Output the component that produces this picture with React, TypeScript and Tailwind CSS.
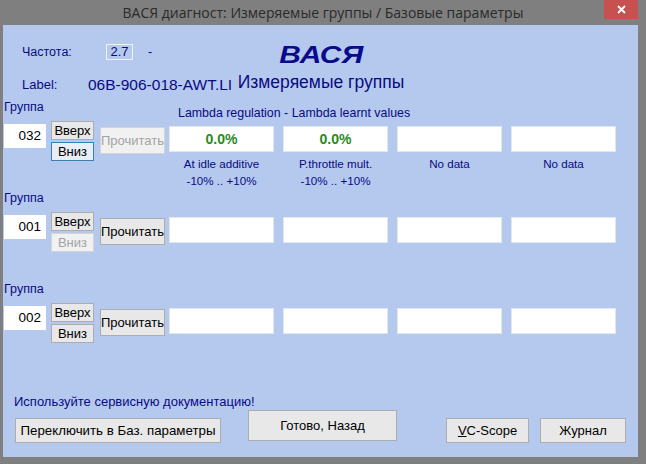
import React from "react"

const navy = "text-[#0a0a82]"

type Group = {
  id: string
  header?: string
  values: string[]
  captions: [string, string][]
  upDisabled?: boolean
  downDisabled?: boolean
  downFocused?: boolean
  readDisabled?: boolean
}

const groups: Group[] = [
  {
    id: "032",
    header: "Lambda regulation - Lambda learnt values",
    values: ["0.0%", "0.0%", "", ""],
    captions: [
      ["At idle additive", "-10% .. +10%"],
      ["P.throttle mult.", "-10% .. +10%"],
      ["No data", ""],
      ["No data", ""],
    ],
    downFocused: true,
    readDisabled: true,
  },
  {
    id: "001",
    values: ["", "", "", ""],
    captions: [],
    downDisabled: true,
  },
  {
    id: "002",
    values: ["", "", "", ""],
    captions: [],
  },
]

function WinButton({
  children,
  className = "",
  disabled,
  focused,
}: {
  children: React.ReactNode
  className?: string
  disabled?: boolean
  focused?: boolean
}) {
  const look = disabled
    ? "border-[#d4d4d4] bg-[#f1f1f1] text-[#a3a3a3]"
    : focused
      ? "border-[#3c7fb1] bg-[#e8eef6] text-black"
      : "border-[#adadad] bg-[#e8e8e8] text-black"
  return (
    <button
      type="button"
      className={`flex items-center justify-center whitespace-nowrap border leading-none ${look} ${className}`}
    >
      {children}
    </button>
  )
}

function GroupBlock({ g }: { g: Group }) {
  return (
    <div className="flex h-[91px]">
      <div className="flex w-[166px] flex-col">
        <div className={`mt-[1px] h-[16px] pl-[1px] text-[12.5px] leading-[16px] ${navy}`}>
          Группа
        </div>
        <div className="flex items-start">
          <div className="ml-[1px] mt-[9px] flex h-[24px] w-[42px] items-center justify-end bg-white pr-[5px] text-[13.5px] text-black">
            {g.id}
          </div>
          <div className="ml-[5px] mt-[6px] flex flex-col gap-[2px]">
            <WinButton className="h-[19px] w-[43px] text-[13px]" disabled={g.upDisabled}>
              Вверх
            </WinButton>
            <WinButton
              className="h-[19px] w-[43px] text-[13px]"
              disabled={g.downDisabled}
              focused={g.downFocused}
            >
              Вниз
            </WinButton>
          </div>
          <WinButton
            className="ml-[6px] mt-[12px] h-[27px] w-[65px] text-[13px]"
            disabled={g.readDisabled}
          >
            Прочитать
          </WinButton>
        </div>
      </div>
      <div className="flex flex-col">
        <div className={`mt-[8px] h-[14px] pl-[9px] text-[12.4px] leading-[14px] ${navy}`}>
          {g.header ?? ""}
        </div>
        <div className="mt-[6px] flex gap-[9px]">
          {g.values.map((v, i) => (
            <div key={i} className="flex w-[105px] flex-col items-center">
              <div className="flex h-[26px] w-full items-center justify-center border border-[#e2e6ee] bg-white text-[14px] font-bold text-[#2a8a1e]">
                {v}
              </div>
              {g.captions[i] && (
                <div className={`mt-[3px] text-center text-[11.6px] leading-[17px] ${navy}`}>
                  <div>{g.captions[i][0]}</div>
                  <div>{g.captions[i][1]}</div>
                </div>
              )}
            </div>
          ))}
        </div>
      </div>
    </div>
  )
}

export default function App() {
  return (
    <div
      className="flex h-[464px] w-[646px] flex-col bg-[#7f7f7f]"
      style={{ fontFamily: '"Liberation Sans", Arial, sans-serif' }}
    >
      <div className="relative flex h-[25px] items-center justify-center">
        <span
          className="text-[14px] text-[#2a2a2a]"
          style={{ fontFamily: '"Open Sans", "Noto Sans", sans-serif' }}
        >
          ВАСЯ диагност: Измеряемые группы / Базовые параметры
        </span>
        <button
          type="button"
          aria-label="Close"
          className="absolute right-[8px] top-0 flex h-[19px] w-[34px] items-center justify-center bg-[#c75050] text-white"
        >
          <svg width="9" height="9" viewBox="0 0 9 9">
            <path d="M1 1 L8 8 M8 1 L1 8" stroke="white" strokeWidth="1.8" />
          </svg>
        </button>
      </div>

      <div className="mb-[7px] ml-[3px] mr-[8px] flex flex-1 flex-col bg-[#b5c9ef]">
        <div className="flex h-[73px]">
          <div className="flex w-[230px] flex-col pl-[19px]">
            <div className={`mt-[19px] flex h-[16px] items-center text-[12.5px] ${navy}`}>
              <span className="w-[84px]">Частота:</span>
              <span className="flex h-[16px] w-[27px] items-center justify-center border border-[#eef2fa] text-[13px]">
                2.7
              </span>
              <span className="ml-[15px]">-</span>
            </div>
            <div className={`mt-[16px] flex h-[18px] items-center ${navy}`}>
              <span className="w-[66px] text-[13px]">Label:</span>
              <span className="text-[15.5px]">06B-906-018-AWT.LI</span>
            </div>
          </div>
          <div className="flex w-[176px] flex-col items-center">
            <div className="mt-[16px] h-[28px] scale-x-[1.3] text-[23px] font-bold italic leading-[28px] text-[#0a0a8c]">
              ВАСЯ
            </div>
            <div className={`mt-[3px] h-[20px] text-[17.5px] leading-[20px] ${navy}`}>
              Измеряемые группы
            </div>
          </div>
        </div>

        {groups.map((g) => (
          <GroupBlock key={g.id} g={g} />
        ))}

        <div className={`ml-[11px] mt-[23px] h-[16px] text-[13px] leading-[16px] ${navy}`}>
          Используйте сервисную документацию!
        </div>
        <div className="flex items-start">
          <WinButton className="ml-[12px] mt-[8px] h-[25px] w-[206px] text-[13.3px]">
            Переключить в Баз. параметры
          </WinButton>
          <WinButton className="ml-[27px] h-[31px] w-[149px] text-[13px]">Готово, Назад</WinButton>
          <WinButton className="ml-[49px] mt-[8px] h-[25px] w-[83px] text-[13px]">
            <span>
              <span className="underline">V</span>C-Scope
            </span>
          </WinButton>
          <WinButton className="ml-[11px] mt-[8px] h-[25px] w-[86px] text-[13px]">Журнал</WinButton>
        </div>
      </div>
    </div>
  )
}
